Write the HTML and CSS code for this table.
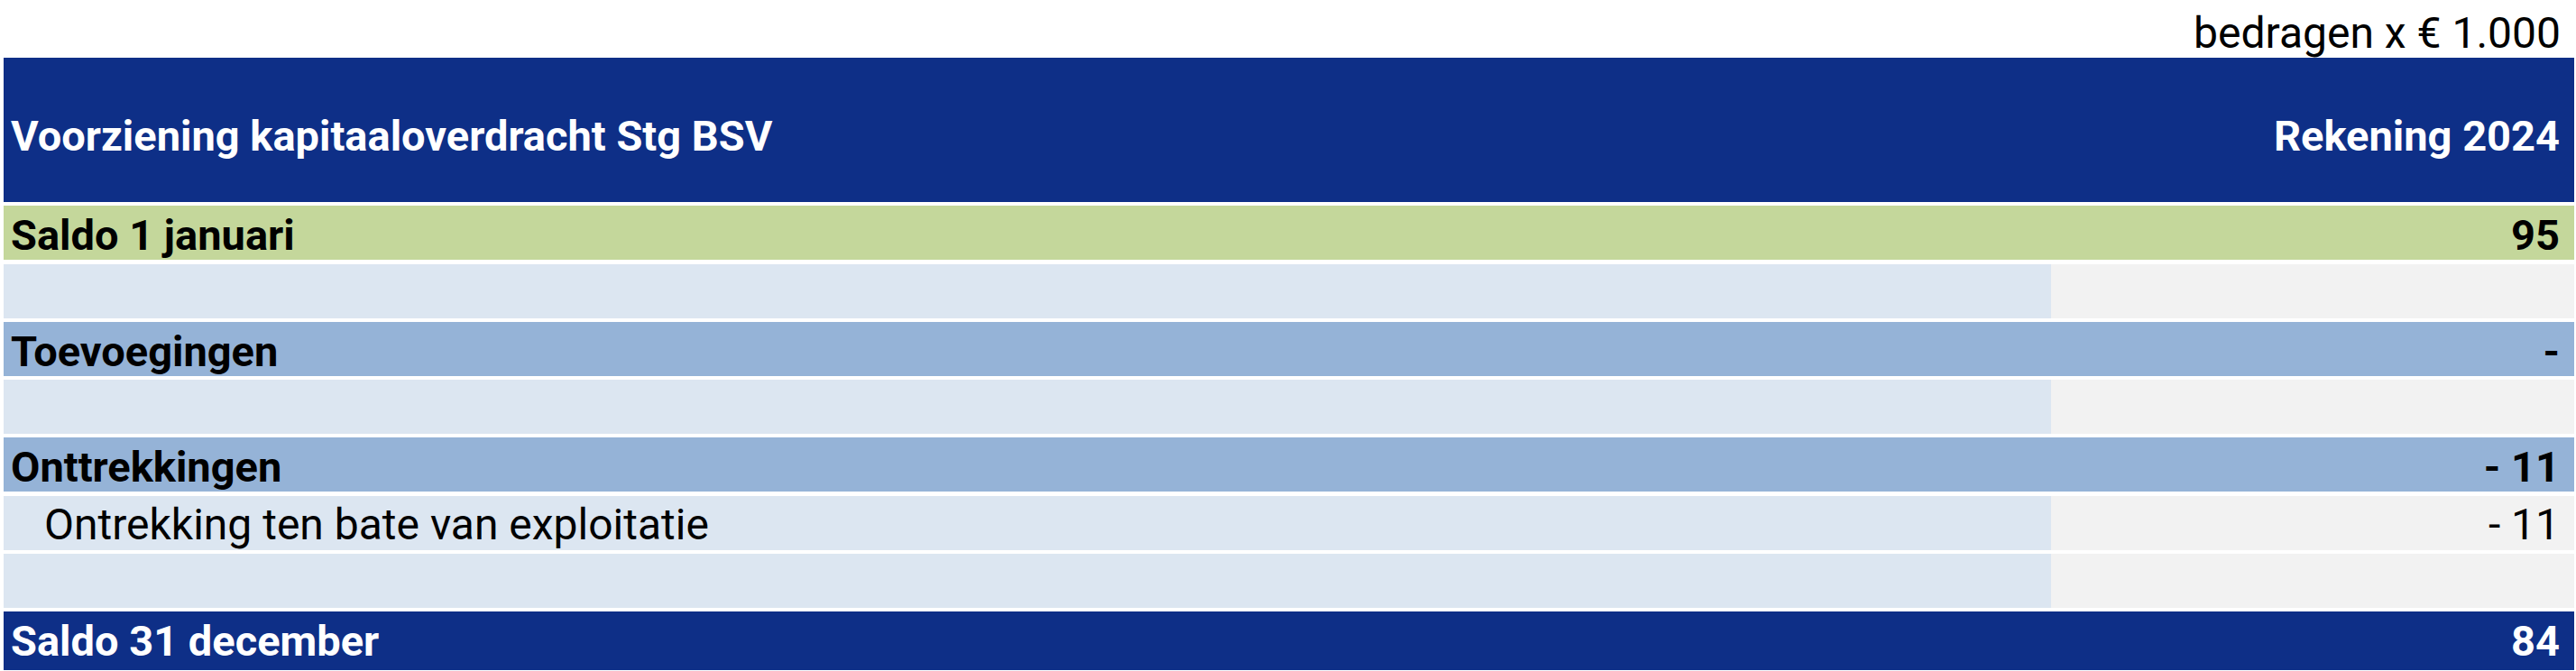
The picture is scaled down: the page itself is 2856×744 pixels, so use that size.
FILE: index.html
```html
<!DOCTYPE html>
<html lang="nl">
<head>
    <meta charset="UTF-8">
    <meta name="viewport" content="width=device-width, initial-scale=1.0">
    <title>Voorziening kapitaaloverdracht Stg BSV</title>
    <link rel="stylesheet" href="styles.css">
</head>
<body>
    <div class="sheet">
        <div class="unit">bedragen x € 1.000</div>

        <div class="table">
            <div class="row head">
                <div class="cell">Voorziening kapitaaloverdracht Stg BSV</div>
                <div class="cell num">Rekening 2024</div>
            </div>

            <div class="row balance">
                <div class="cell">Saldo 1 januari</div>
                <div class="cell num">95</div>
            </div>

            <div class="row line">
                <div class="cell"></div>
                <div class="cell num"></div>
            </div>

            <div class="row group">
                <div class="cell">Toevoegingen</div>
                <div class="cell num">-</div>
            </div>

            <div class="row line">
                <div class="cell"></div>
                <div class="cell num"></div>
            </div>

            <div class="row group">
                <div class="cell">Onttrekkingen</div>
                <div class="cell num">- 11</div>
            </div>

            <div class="row line">
                <div class="cell indent">Ontrekking ten bate van exploitatie</div>
                <div class="cell num">- 11</div>
            </div>

            <div class="row line">
                <div class="cell"></div>
                <div class="cell num"></div>
            </div>

            <div class="row total">
                <div class="cell">Saldo 31 december</div>
                <div class="cell num">84</div>
            </div>
        </div>
    </div>
</body>
</html>
```

FILE: styles.css
```css
body {
    margin: 0;
    font-family: Roboto, "Liberation Sans", sans-serif;
    color: #000;
    background: #fff;
}
.sheet {
    width: 2850px;
    padding: 0 2px 0 4px;
}
.unit {
    box-sizing: border-box;
    height: 64px;
    padding: 8px 15px 0 0;
    font-size: 48px;
    text-align: right;
}
.table {
    display: flex;
    flex-direction: column;
    gap: 4.3px;
}
.row {
    display: grid;
    grid-template-columns: 1fr 580px;
    height: 60px;
}
.cell {
    display: flex;
    align-items: flex-end;
    padding: 0 8px;
    font-size: 47px;
    font-weight: 700;
    white-space: nowrap;
    overflow: hidden;
}
.num {
    justify-content: flex-end;
    padding-right: 16px;
}
.indent {
    padding-left: 45px;
}

.head { height: 160px; background: #0e2f87; color: #fff; }
.head .cell { align-items: flex-start; padding-top: 59px; }
.balance { background: #c4d79b; }
.group { background: #95b3d7; }
.line .cell { background: #dce6f1; font-size: 48px; font-weight: 400; }
.line .num { background: #f2f2f2; }
.total { height: 65px; background: #0e2f87; color: #fff; }
.total .cell { padding-bottom: 5px; }
```
